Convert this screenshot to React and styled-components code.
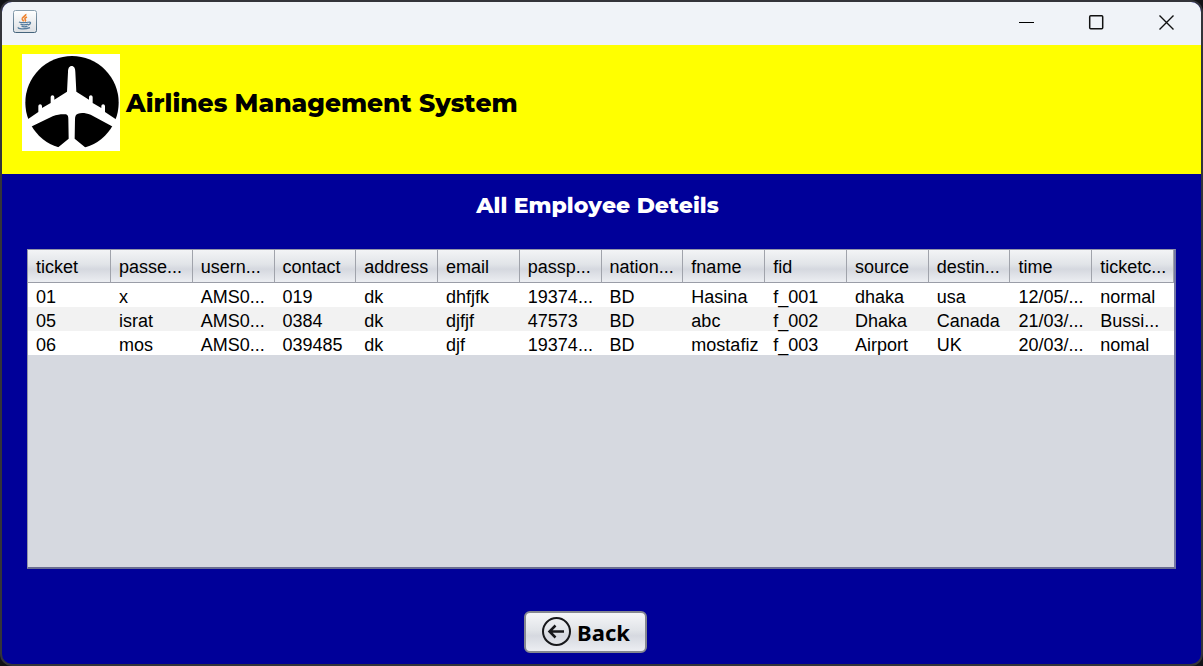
import React from "react";
import styled, { createGlobalStyle } from "styled-components";

const GlobalStyle = createGlobalStyle`
  *, *::before, *::after { box-sizing: border-box; }
  body { margin: 0; background: #15161a; }
`;

const Desktop = styled.div`
  display: flex;
  min-height: 100vh;
  background: #111216;
`;

const Window = styled.div`
  flex: 1;
  min-width: 0;
  display: flex;
  flex-direction: column;
  border: 2px solid #33343a;
  border-radius: 12px;
  overflow: hidden;
  background: #000099;
  font-family: "Liberation Sans", Arial, sans-serif;
  color: #000;
`;

const TitleBar = styled.div`
  display: flex;
  align-items: center;
  justify-content: space-between;
  height: 43px;
  padding: 0 0 3px 11px;
  background: #f0f3f8;
`;

const WindowControls = styled.div`
  display: flex;
`;

const WindowButton = styled.button`
  display: flex;
  align-items: center;
  justify-content: center;
  width: 70px;
  height: 40px;
  padding: 0;
  border: 0;
  background: transparent;
`;

const Banner = styled.header`
  display: flex;
  align-items: flex-start;
  gap: 6px;
  height: 129px;
  padding: 9px 20px;
  background: #ffff00;
`;

const BannerTitle = styled.h1`
  margin: 0;
  font-family: Montserrat, Inter, sans-serif;
  font-size: 25px;
  font-weight: 800;
  font-kerning: none;
  line-height: 98px;
  white-space: nowrap;
`;

const Content = styled.main`
  flex: 1;
  display: flex;
  flex-direction: column;
  align-items: center;
  padding: 16px 25px 11px;
`;

const SectionTitle = styled.h2`
  margin: 0 8px 27px 0;
  font-family: Montserrat, Inter, sans-serif;
  font-size: 22px;
  font-weight: 800;
  font-kerning: none;
  line-height: 32px;
  color: #fff;
`;

const TablePane = styled.div`
  flex: 1;
  width: 100%;
  margin-bottom: 42px;
  border: 1px solid #9295a8;
  border-right: 2px solid #7478a4;
  border-bottom: 2px solid #696d91;
  background: #d6d9e0;
`;

const Table = styled.table`
  width: 100%;
  table-layout: fixed;
  border-collapse: separate;
  border-spacing: 0;
  font-size: 18px;
  line-height: 20px;
`;

const HeadCell = styled.th`
  height: 33px;
  padding: 2px 0 0 8px;
  border-right: 1px solid #a0a3ab;
  border-bottom: 1px solid #9a9da7;
  background: linear-gradient(#f3f4f6, #e1e4e8 45%, #d5d8df 60%, #eceef2);
  font-weight: 400;
  text-align: left;
  white-space: nowrap;
  &:first-child { width: 83px; }
`;

const Row = styled.tr`
  background: #fff;
  &:nth-child(even) { background: #f2f2f2; }
`;

const Cell = styled.td`
  height: 24px;
  padding: 4px 0 0 8px;
  white-space: nowrap;
`;

const BackButton = styled.button`
  display: flex;
  align-items: center;
  justify-content: center;
  gap: 5px;
  width: 123px;
  height: 42px;
  margin-right: 32px;
  padding: 0;
  border: 2px solid #858890;
  border-radius: 6px;
  background: linear-gradient(#f5f6f8, #e1e4e8 45%, #d6d9e0 60%, #eceef2);
  font-family: "Noto Sans", sans-serif;
  font-size: 22px;
  font-weight: 700;
  line-height: 30px;
  color: #000;
`;

const columns = [
  "ticket", "passe...", "usern...", "contact", "address", "email", "passp...",
  "nation...", "fname", "fid", "source", "destin...", "time", "ticketc...",
];

const rows = [
  ["01", "x", "AMS0...", "019", "dk", "dhfjfk", "19374...", "BD", "Hasina", "f_001", "dhaka", "usa", "12/05/...", "normal"],
  ["05", "israt", "AMS0...", "0384", "dk", "djfjf", "47573", "BD", "abc", "f_002", "Dhaka", "Canada", "21/03/...", "Bussi..."],
  ["06", "mos", "AMS0...", "039485", "dk", "djf", "19374...", "BD", "mostafiz", "f_003", "Airport", "UK", "20/03/...", "nomal"],
];

function JavaIcon() {
  return (
    <svg width="24" height="24" viewBox="0 0 24 24" fill="none" aria-hidden="true">
      <defs>
        <linearGradient id="java-tile" x1="0" y1="0" x2="0" y2="1">
          <stop offset="0" stopColor="#fff" />
          <stop offset="1" stopColor="#dcdfe3" />
        </linearGradient>
        <linearGradient id="java-edge" x1="0" y1="0" x2="0" y2="1">
          <stop offset="0" stopColor="#8ba0af" />
          <stop offset="1" stopColor="#45647c" />
        </linearGradient>
      </defs>
      <rect x="0.5" y="0.5" width="23" height="22" rx="2" fill="url(#java-tile)" stroke="url(#java-edge)" />
      <path d="M12.800 4c.7 2-4 2.900-3.600 5 .2.900 1 1.500 1.500 2.300M14 7c-1.800.800-2.800 1.700-1.700 2.800.6.700.2 1.200-.2 1.700" stroke="#ee8430" strokeWidth="1.600" />
      <path d="M6 12c1.500.900 7 .900 10 0M7.500 14.200c1.500.700 5.500.700 7.500 0M8.500 16.200c1.500.600 4.500.600 6 0M15.800 12.200c2.400-.7 2.400 2.100-.8 2.800M5.500 17.300c-2 1.800 7 2.100 11.500.4" stroke="#537b9d" strokeWidth="1.300" />
    </svg>
  );
}

function PlaneLogo() {
  return (
    <svg width="98" height="97" viewBox="0 0 294 291" role="img" aria-label="Airplane">
      <rect width="294" height="291" fill="#fff" />
      <circle cx="150" cy="146" r="140" fill="#000" />
      <path
        fill="#fff"
        d="M149 36C142 36 138 43 138 54L135 113L97 137V130C97 122 86 122 86 130V147L60 162V157C60 149 49 149 49 157V174L14 198L10 224L30 217L92 187C108 180 123 180 132 181C138 183 139 188 139 196L140 254L106 282V294H192V282L158 254L159 196C159 188 161 181 168 179C178 175 192 177 206 182L270 217L294 224L285 198L249 174V157C249 149 238 149 238 157V162L212 147V130C212 122 201 122 201 130V137L163 113L160 54C160 43 156 36 149 36Z"
      />
    </svg>
  );
}

function BackIcon() {
  return (
    <svg width="31" height="31" viewBox="0 0 31 31" fill="none" stroke="#17181b" aria-hidden="true">
      <circle cx="15.500" cy="14.500" r="13.500" strokeWidth="2" />
      <path d="M23 14.500H9M14.500 8.500L8.500 14.500L14.500 20.500" strokeWidth="2.500" />
    </svg>
  );
}

export default function App() {
  return (
    <Desktop>
      <GlobalStyle />
      <Window>
        <TitleBar>
          <JavaIcon />
          <WindowControls>
            <WindowButton aria-label="Minimize">
              <svg width="16" height="16" viewBox="0 0 16 16"><path d="M1 8.500H16" stroke="#000" /></svg>
            </WindowButton>
            <WindowButton aria-label="Maximize">
              <svg width="16" height="16" viewBox="0 0 16 16"><rect x="1.700" y="1.700" width="13" height="13" rx="1" fill="none" stroke="#111" strokeWidth="1.500" /></svg>
            </WindowButton>
            <WindowButton aria-label="Close">
              <svg width="16" height="16" viewBox="0 0 16 16"><path d="M1.500 1.500L15.500 15.500M15.500 1.500L1.500 15.500" stroke="#111" strokeWidth="1.400" /></svg>
            </WindowButton>
          </WindowControls>
        </TitleBar>
        <Banner>
          <PlaneLogo />
          <BannerTitle>Airlines Management System</BannerTitle>
        </Banner>
        <Content>
          <SectionTitle>All Employee Deteils</SectionTitle>
          <TablePane>
            <Table>
              <thead>
                <tr>
                  {columns.map((name) => <HeadCell key={name} scope="col">{name}</HeadCell>)}
                </tr>
              </thead>
              <tbody>
                {rows.map((row) => (
                  <Row key={row[0]}>
                    {row.map((value, i) => <Cell key={columns[i]}>{value}</Cell>)}
                  </Row>
                ))}
              </tbody>
            </Table>
          </TablePane>
          <BackButton type="button">
            <BackIcon />
            Back
          </BackButton>
        </Content>
      </Window>
    </Desktop>
  );
}
